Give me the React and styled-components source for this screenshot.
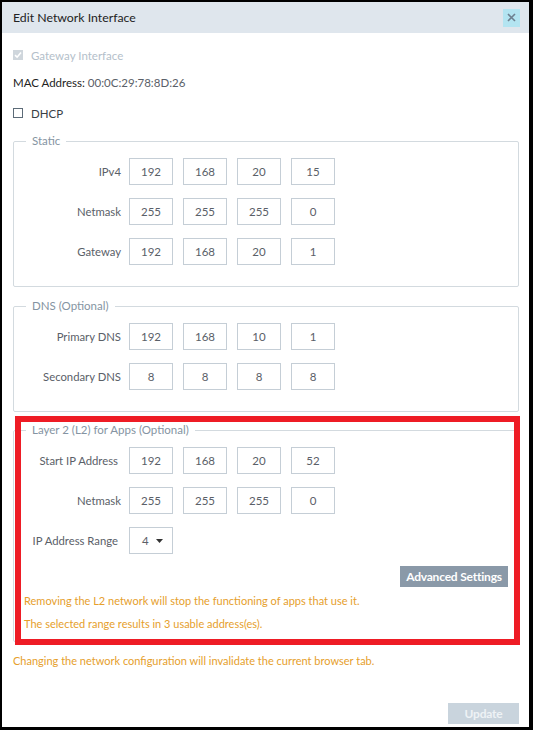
import React from "react";
import styled, { createGlobalStyle } from "styled-components";

const GlobalStyle = createGlobalStyle`
  html, body {
    margin: 0;
    padding: 0;
    background: #000;
  }
  body {
    font-family: "Lato", "Liberation Sans", sans-serif;
  }
`;

const Dialog = styled.div`
  width: 527px;
  height: 725px;
  margin: 2px 4px 3px 2px;
  background: #fff;
  display: flex;
  flex-direction: column;
  box-sizing: border-box;
`;

const Header = styled.div`
  height: 31px;
  background: #dfe6ed;
  display: flex;
  align-items: center;
  justify-content: space-between;
  padding: 0 9px 0 11px;
  flex-shrink: 0;
`;

const Title = styled.div`
  font-size: 12.3px;
  color: #222;
`;

const CloseButton = styled.button`
  width: 17px;
  height: 18px;
  border: none;
  padding: 0;
  background: #b3e4f1;
  display: flex;
  align-items: center;
  justify-content: center;
`;

const Body = styled.div`
  flex: 1;
  padding: 14px 10px 0 11px;
  display: flex;
  flex-direction: column;
`;

const CheckRow = styled.label`
  display: flex;
  align-items: center;
  gap: 8px;
  height: 16px;
  font-size: 11.5px;
  color: ${(p) => (p.disabled ? "#b4c0ca" : "#3a3f45")};
  margin-bottom: ${(p) => p.mb || 0}px;
`;

const Box = styled.span`
  width: 10px;
  height: 10px;
  box-sizing: border-box;
  border: ${(p) => (p.checked ? "none" : "1.5px solid #5c6b78")};
  background: ${(p) => (p.checked ? "#cfd6dc" : "#fff")};
  display: flex;
  align-items: center;
  justify-content: center;
`;

const MacRow = styled.div`
  font-size: 11.5px;
  color: #222;
  height: 16px;
  line-height: 16px;
  margin-bottom: 14px;
`;

const MacValue = styled.span`
  color: #5a6068;
`;

const Fieldset = styled.fieldset`
  position: relative;
  margin: 0 0 ${(p) => p.mb || 0}px 0;
  border: 1px solid #d3dadf;
  border-radius: 2px;
  padding: ${(p) => p.pt}px 10px ${(p) => p.pb}px 0;
  display: flex;
  flex-direction: column;
  gap: 13px;
  min-width: 0;
`;

const Legend = styled.legend`
  margin-left: 12px;
  padding: 0 6px;
  font-size: 11.5px;
  line-height: 16px;
  color: #8594a2;
`;

const Highlight = styled.div`
  position: absolute;
  left: 1px;
  right: -2px;
  top: -22px;
  bottom: -4px;
  border: 6px solid #ee1c25;
  pointer-events: none;
`;

const Row = styled.div`
  display: flex;
  align-items: center;
`;

const Label = styled.div`
  width: ${(p) => p.w || 107}px;
  padding-right: ${(p) => 115 - (p.w || 107)}px;
  text-align: right;
  font-size: 11.3px;
  color: #5a6068;
  box-sizing: content-box;
`;

const Octets = styled.div`
  display: flex;
  gap: 10px;
`;

const Octet = styled.div`
  width: 44px;
  height: 27px;
  box-sizing: border-box;
  border: 1px solid #c5ced6;
  display: flex;
  align-items: center;
  justify-content: center;
  font-size: 11.5px;
  color: #5a6068;
`;

const Select = styled.div`
  width: 44px;
  height: 27px;
  box-sizing: border-box;
  border: 1px solid #c5ced6;
  display: flex;
  align-items: center;
  justify-content: space-between;
  padding: 0 9px 0 12px;
  font-size: 11.5px;
  color: #5a6068;
`;

const ButtonRow = styled.div`
  display: flex;
  justify-content: flex-end;
  margin-top: -1px;
`;

const GreyButton = styled.button`
  border: none;
  font-family: inherit;
  font-weight: 700;
  font-size: 12px;
  letter-spacing: -0.2px;
  padding: 0;
  width: ${(p) => p.w}px;
  height: ${(p) => p.h}px;
  background: ${(p) => (p.disabled ? "#c9d4dd" : "#8a99a8")};
  color: ${(p) => (p.disabled ? "#eef2f5" : "#fff")};
`;

const Warnings = styled.div`
  display: flex;
  flex-direction: column;
  gap: 7px;
  padding-left: 10px;
  margin-top: -7px;
`;

const Warning = styled.div`
  font-size: 11px;
  line-height: 16px;
  color: #e6a02c;
`;

const Footer = styled.div`
  margin-top: 11px;
`;

const Actions = styled.div`
  margin-top: auto;
  display: flex;
  justify-content: flex-end;
  padding-bottom: 3px;
`;

const CheckMark = () => (
  <svg width="8" height="8" viewBox="0 0 8 8">
    <path d="M1 4.2 L3.1 6.2 L7 1.6" fill="none" stroke="#fff" strokeWidth="1.6" />
  </svg>
);

const IpRow = ({ label, values, w }) => (
  <Row>
    <Label w={w}>{label}</Label>
    <Octets>
      {values.map((v, i) => (
        <Octet key={i}>{v}</Octet>
      ))}
    </Octets>
  </Row>
);

const App = () => {
  return (
    <>
      <GlobalStyle />
      <Dialog>
        <Header>
          <Title>Edit Network Interface</Title>
          <CloseButton>
            <svg width="9" height="9" viewBox="0 0 9 9">
              <path d="M1 1 L8 8 M8 1 L1 8" stroke="#6e8090" strokeWidth="1.6" />
            </svg>
          </CloseButton>
        </Header>
        <Body>
          <CheckRow disabled mb={12}>
            <Box checked>
              <CheckMark />
            </Box>
            Gateway Interface
          </CheckRow>
          <MacRow>
            MAC Address: <MacValue>00:0C:29:78:8D:26</MacValue>
          </MacRow>
          <CheckRow mb={12}>
            <Box />
            DHCP
          </CheckRow>

          <Fieldset pt={9} pb={21} mb={11}>
            <Legend>Static</Legend>
            <IpRow label="IPv4" values={[192, 168, 20, 15]} />
            <IpRow label="Netmask" values={[255, 255, 255, 0]} />
            <IpRow label="Gateway" values={[192, 168, 20, 1]} />
          </Fieldset>

          <Fieldset pt={9} pb={21} mb={10}>
            <Legend>DNS (Optional)</Legend>
            <IpRow label="Primary DNS" values={[192, 168, 10, 1]} />
            <IpRow label="Secondary DNS" values={[8, 8, 8, 8]} />
          </Fieldset>

          <Fieldset pt={9} pb={9}>
            <Legend>Layer 2 (L2) for Apps (Optional)</Legend>
            <IpRow label="Start IP Address" w={104} values={[192, 168, 20, 52]} />
            <IpRow label="Netmask" values={[255, 255, 255, 0]} />
            <Row>
              <Label w={104}>IP Address Range</Label>
              <Select>
                4
                <svg width="7" height="4" viewBox="0 0 7 4">
                  <path d="M0 0 L7 0 L3.5 4 Z" fill="#333" />
                </svg>
              </Select>
            </Row>
            <ButtonRow>
              <GreyButton w={108} h={21}>Advanced Settings</GreyButton>
            </ButtonRow>
            <Warnings>
              <Warning>Removing the L2 network will stop the functioning of apps that use it.</Warning>
              <Warning>The selected range results in 3 usable address(es).</Warning>
            </Warnings>
            <Highlight />
          </Fieldset>

          <Footer>
            <Warning>Changing the network configuration will invalidate the current browser tab.</Warning>
          </Footer>

          <Actions>
            <GreyButton disabled w={71} h={21}>Update</GreyButton>
          </Actions>
        </Body>
      </Dialog>
    </>
  );
};

export default App;
